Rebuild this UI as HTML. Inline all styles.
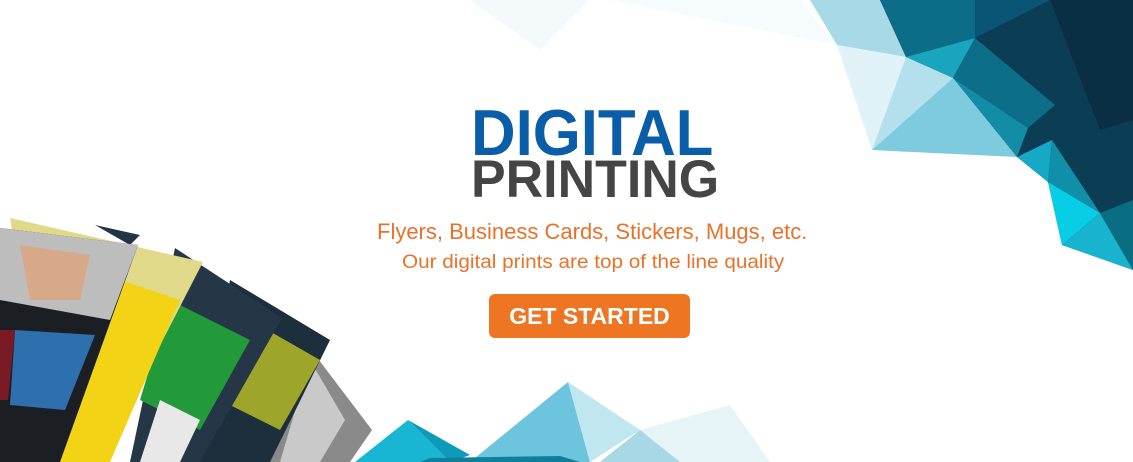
<!DOCTYPE html>
<html><head><meta charset="utf-8"><style>
html,body{margin:0;padding:0;background:#fff;}
#w{position:relative;width:1133px;height:462px;overflow:hidden;background:#fff;font-family:"Liberation Sans",sans-serif;}
svg{position:absolute;left:0;top:0}
.t{position:absolute;white-space:nowrap;font-weight:bold;}
</style></head><body><div id="w">
<svg width="1133" height="462" viewBox="0 0 1133 462">
<polygon points="470,0 590,0 540,50" fill="#f4fafc"/>
<polygon points="610,0 800,0 837,45 700,18" fill="#f6fbfd"/>
<polygon points="810,0 887,0 906,57 837,45" fill="#a8d9e7"/>
<polygon points="880,0 1133,0 1133,270 1062,245 1048,182 1017,157 953,78 906,57" fill="#0b3d55"/>
<polygon points="880,0 975,0 975,38 906,57" fill="#0b6d88"/>
<polygon points="975,0 1050,0 975,38" fill="#0a5575"/>
<polygon points="1050,0 1133,0 1133,120 1100,130" fill="#0a2f45"/>
<polygon points="837,45 906,57 872,150" fill="#e0f2f8"/>
<polygon points="906,57 953,78 872,150" fill="#b4dfec"/>
<polygon points="953,78 1017,157 872,150" fill="#7ecbe0"/>
<polygon points="906,57 975,38 953,78" fill="#1aa5bf"/>
<polygon points="953,78 975,38 1055,105 1028,128" fill="#0d6e8a"/>
<polygon points="1017,157 953,78 1028,128" fill="#138ca6"/>
<polygon points="1017,157 1052,140 1048,182" fill="#15a9c6"/>
<polygon points="1052,140 1100,213 1048,182" fill="#118ea8"/>
<polygon points="1048,182 1062,245 1100,213" fill="#08cde6"/>
<polygon points="1062,245 1100,213 1133,270" fill="#17b3cf"/>
<polygon points="1100,213 1133,200 1133,270" fill="#0a6e82"/>
<polygon points="355,462 408,420 450,462" fill="#19b6d3"/>
<polygon points="408,420 470,455 450,462" fill="#0e9bba"/>
<polygon points="470,462 568,382 590,462" fill="#6cc5dc"/>
<polygon points="568,382 640,430 590,462" fill="#c0e6f0"/>
<polygon points="640,430 730,405 770,462 600,462" fill="#e6f4f8"/>
<polygon points="600,462 640,430 680,462" fill="#a8d8e6"/>
<polygon points="430,458 560,456 580,462 420,462" fill="#0e7f9c"/>
<polygon points="300,335 372,430 350,462 255,462" fill="#8a8a8a"/>
<polygon points="310,360 345,420 320,462 280,462" fill="#c9c9c9"/>
<polygon points="230,280 330,340 270,462 200,462" fill="#1d2f3c"/>
<polygon points="250,320 320,360 280,430 220,400" fill="#9da52a"/>
<polygon points="175,248 282,318 200,462 130,462" fill="#253746"/>
<polygon points="170,300 250,340 200,430 140,400" fill="#239a3a"/>
<polygon points="160,400 200,420 180,462 140,462" fill="#e8e8e8"/>
<polygon points="10,218 203,262 100,462 50,462" fill="#e0d98a"/>
<polygon points="120,280 180,300 110,462 60,462" fill="#f2d315"/>
<polygon points="95,225 140,235 130,245" fill="#233445"/>
<polygon points="0,228 138,245 60,462 0,462" fill="#1b1f24"/>
<polygon points="0,228 138,245 110,320 0,300" fill="#bdbdbd"/>
<polygon points="20,245 90,255 80,300 30,300" fill="#d8a988"/>
<polygon points="15,330 95,335 65,410 10,405" fill="#2e6fae"/>
<polygon points="0,330 15,330 8,400 0,400" fill="#7a1a25"/>
</svg>
<div class="t" style="left:471px;top:100px;font-size:65px;color:#0a5ea8;transform:scaleX(0.95);transform-origin:left top;line-height:65px;">DIGITAL</div>
<div class="t" style="left:471px;top:152px;font-size:53px;color:#454545;transform:scaleX(0.98);transform-origin:left top;line-height:55px;">PRINTING</div>
<div class="t" style="left:377px;top:219px;font-size:22px;color:#e8722a;font-weight:normal;">Flyers, Business Cards, Stickers, Mugs, etc.</div>
<div class="t" style="left:402px;top:252px;font-size:19px;color:#e8722a;font-weight:normal;transform:scaleX(1.09);transform-origin:left top;">Our digital prints are top of the line quality</div>
<div style="position:absolute;left:489px;top:294px;width:201px;height:44px;background:#ee7623;border-radius:6px;color:#fff;font-size:23px;font-weight:bold;line-height:44px;text-align:center;font-family:'Liberation Sans',sans-serif;">GET STARTED</div>
</div></body></html>
